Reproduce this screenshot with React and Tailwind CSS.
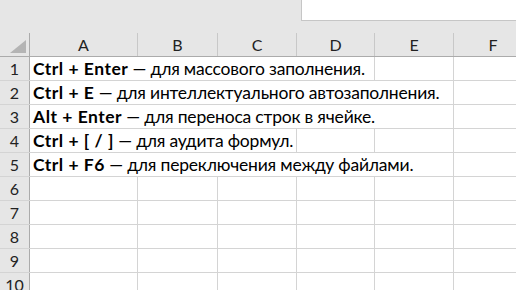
import React from 'react';

const cols = [
  { name: 'A', w: 'w-[108px]' },
  { name: 'B', w: 'w-[80px]' },
  { name: 'C', w: 'w-[79px]' },
  { name: 'D', w: 'w-[78px]' },
  { name: 'E', w: 'w-[79px]' },
  { name: 'F', w: 'w-[79px]' },
];

// span = width the overflowing text covers, rest = remaining empty columns
const rows = [
  { n: 1, key: 'Ctrl + Enter', text: ' — для массового заполнения.', span: 'w-[345px]', rest: ['E', 'F'] },
  { n: 2, key: 'Ctrl + E', text: ' — для интеллектуального автозаполнения.', span: 'w-[424px]', rest: ['F'] },
  { n: 3, key: 'Alt + Enter', text: ' — для переноса строк в ячейке.', span: 'w-[424px]', rest: ['F'] },
  { n: 4, key: 'Ctrl + [ / ]', text: ' — для аудита формул.', span: 'w-[267px]', rest: ['D', 'E', 'F'] },
  { n: 5, key: 'Ctrl + F6', text: ' — для переключения между файлами.', span: 'w-[424px]', rest: ['F'] },
  { n: 6 }, { n: 7 }, { n: 8 }, { n: 9 }, { n: 10 },
];

function RowHead({ n }) {
  return (
    <div className="w-[30px] shrink-0 flex items-center justify-center bg-[#e6e6e6] border-r border-[#ababab] text-[16px] text-[#222] pt-[1px]">
      {n}
    </div>
  );
}

function App() {
  return (
    <div className="w-[516px] h-[290px] overflow-hidden bg-white font-['Lato',sans-serif] text-black">
      {/* formula bar strip */}
      <div className="h-[33px] bg-[#e6e6e6] flex justify-end">
        <div className="w-[215px] h-[21px] bg-white border-l border-b border-[#c6c6c6]" />
      </div>

      {/* column headers */}
      <div className="flex h-[24px] bg-[#e6e6e6] border-b border-[#ababab]">
        <div className="w-[30px] shrink-0 relative border-r border-[#ababab]">
          <svg className="absolute left-[10px] top-[7px]" width="16" height="13" viewBox="0 0 16 13">
            <polygon points="16,0 16,13 0,13" fill="#b4b4b4" />
          </svg>
        </div>
        {cols.map(c => (
          <div key={c.name} className={`${c.w} shrink-0 flex items-center justify-center border-r border-[#c8c8c8] text-[16px] text-[#222] pt-[1px]`}>
            {c.name}
          </div>
        ))}
      </div>

      {rows.map(r => (
        <div key={r.n} className="flex h-[24px] border-b border-[#d4d4d4]">
          <RowHead n={r.n} />
          {r.key ? (
            <>
              <div className={`${r.span} shrink-0 flex items-center pl-[3px] pt-[1px] border-r border-[#d4d4d4] whitespace-nowrap text-[17.5px]`}>
                <b className="font-bold tracking-[0.5px]">{r.key}</b>
                <span className="whitespace-pre tracking-[-0.2px]">{r.text}</span>
              </div>
              {cols.filter(c => r.rest.includes(c.name)).map(c => (
                <div key={c.name} className={`${c.w} shrink-0 border-r border-[#d4d4d4]`} />
              ))}
            </>
          ) : (
            cols.map(c => (
              <div key={c.name} className={`${c.w} shrink-0 border-r border-[#d4d4d4]`} />
            ))
          )}
        </div>
      ))}
    </div>
  );
}

export default App;
